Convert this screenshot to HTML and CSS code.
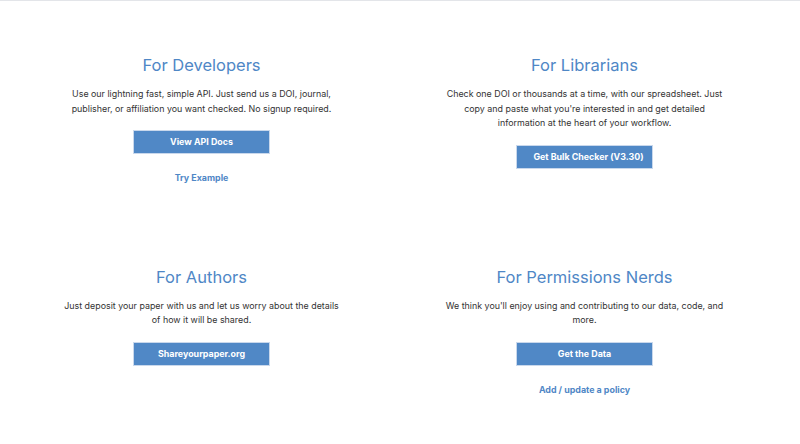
FILE: index.html
```html
<!DOCTYPE html>
<html lang="en">
<head>
    <meta charset="UTF-8">
    <meta name="viewport" content="width=device-width, initial-scale=1.0">
    <title>Get Started</title>
    <link rel="stylesheet" href="styles.css">
</head>
<body>
    <main class="audiences">
        <!-- Developers -->
        <section class="audience">
            <h2 class="audience-title">For Developers</h2>
            <p class="audience-text">Use our lightning fast, simple API. Just send us a DOI, journal, publisher, or affiliation you want checked. No signup required.</p>
            <a href="#" class="btn">View API Docs</a>
            <a href="#" class="link">Try Example</a>
        </section>

        <!-- Librarians -->
        <section class="audience">
            <h2 class="audience-title">For Librarians</h2>
            <p class="audience-text">Check one DOI or thousands at a time, with our spreadsheet. Just copy and paste what you're interested in and get detailed information at the heart of your workflow.</p>
            <a href="#" class="btn btn-wide">Get Bulk Checker (V3.30)</a>
        </section>

        <!-- Authors -->
        <section class="audience">
            <h2 class="audience-title">For Authors</h2>
            <p class="audience-text">Just deposit your paper with us and let us worry about the details of how it will be shared.</p>
            <a href="#" class="btn">Shareyourpaper.org</a>
        </section>

        <!-- Nerds -->
        <section class="audience">
            <h2 class="audience-title">For Permissions Nerds</h2>
            <p class="audience-text">We think you'll enjoy using and contributing to our data, code, and more.</p>
            <a href="#" class="btn">Get the Data</a>
            <a href="#" class="link">Add / update a policy</a>
        </section>
    </main>
</body>
</html>
```

FILE: styles.css
```css
/* styles.css */

body {
    margin: 0;
    background-color: #fff;
    font-family: 'Inter', 'Liberation Sans', sans-serif;
    color: #333;
    border-top: 1px solid #e3e5e9;
}

.audiences {
    display: grid;
    grid-template-columns: 1fr 1fr;
    padding: 0 24px 0 10px;
}

.audience {
    display: flex;
    flex-direction: column;
    align-items: center;
    text-align: center;
    padding: 53px 0 27px;
}

.audience-title {
    font-size: 16.5px;
    font-weight: 400;
    line-height: 22px;
    color: #4f87c6;
    margin: 0 0 11px;
}

.audience-text {
    font-size: 8.9px;
    line-height: 14.5px;
    max-width: 280px;
    margin: 0 0 14px;
}

.btn {
    display: block;
    box-sizing: border-box;
    width: 137px;
    height: 24px;
    line-height: 22px;
    background-color: #5088c6;
    border: 1px solid #c9d8ec;
    color: #fff;
    font-size: 8.9px;
    font-weight: 700;
    text-decoration: none;
    white-space: nowrap;
}

.btn-wide {
    padding-left: 8px;
}

.link {
    margin-top: 17px;
    font-size: 8.9px;
    font-weight: 700;
    line-height: 14.5px;
    color: #4f87c6;
    text-decoration: none;
}
```
